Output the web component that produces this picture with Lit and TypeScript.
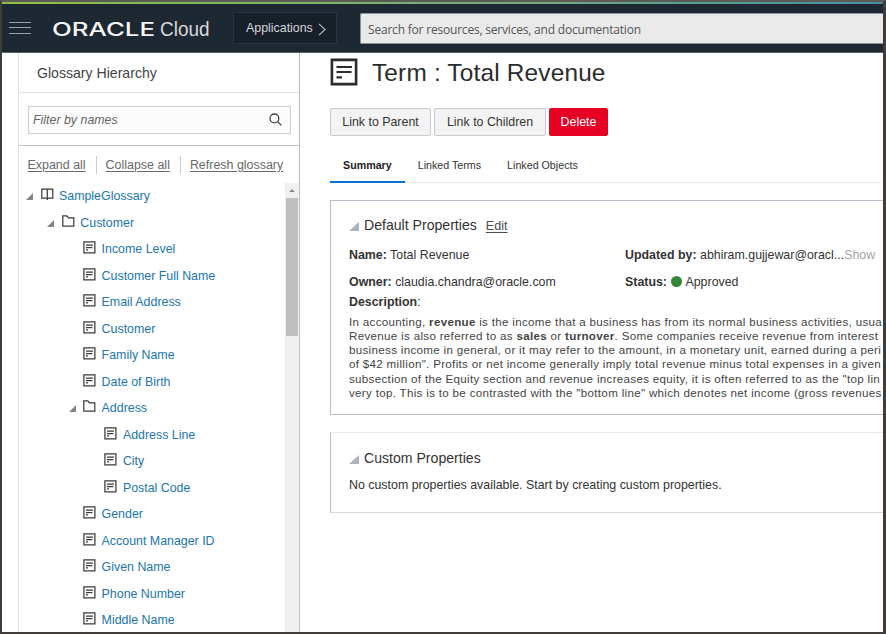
import { LitElement, html, css, svg, nothing } from "lit";
import { customElement } from "lit/decorators.js";
import { classMap } from "lit/directives/class-map.js";
import { styleMap } from "lit/directives/style-map.js";

type Kind = "book" | "folder" | "term";
interface TreeItem { label: string; kind: Kind; level: number; }

const TREE: TreeItem[] = [
  { label: "SampleGlossary", kind: "book", level: 0 },
  { label: "Customer", kind: "folder", level: 1 },
  { label: "Income Level", kind: "term", level: 2 },
  { label: "Customer Full Name", kind: "term", level: 2 },
  { label: "Email Address", kind: "term", level: 2 },
  { label: "Customer", kind: "term", level: 2 },
  { label: "Family Name", kind: "term", level: 2 },
  { label: "Date of Birth", kind: "term", level: 2 },
  { label: "Address", kind: "folder", level: 2 },
  { label: "Address Line", kind: "term", level: 3 },
  { label: "City", kind: "term", level: 3 },
  { label: "Postal Code", kind: "term", level: 3 },
  { label: "Gender", kind: "term", level: 2 },
  { label: "Account Manager ID", kind: "term", level: 2 },
  { label: "Given Name", kind: "term", level: 2 },
  { label: "Phone Number", kind: "term", level: 2 },
  { label: "Middle Name", kind: "term", level: 2 },
];

const GLYPHS = {
  book: svg`<path d="M.8 1.2H6.3V10.2H.8ZM6.3 1.2H11.8V10.2H6.3ZM6.3 10V12" />`,
  folder: svg`<path d="M.8 11.2V.9H4.8L6.4 2.9H11.8V11.2Z" />`,
  term: svg`<path d="M.9 .9H11.9V11.9H.9Z" /><path d="M3 4.2H10M3 6.5H9.4M3 8.8H5" />`,
};

@customElement("glossary-tree")
export class GlossaryTree extends LitElement {
  static styles = css`
    :host { display: block; flex: 1; min-width: 0; }
    .row { height: 26.5px; display: flex; align-items: center; white-space: nowrap; }
    .twist { width: 7px; height: 7px; margin-right: 7.5px; fill: #858585; flex: none; position: relative; top: .5px; }
    .twist.leaf { visibility: hidden; }
    .glyph { width: 13px; height: 13px; margin-right: 5.5px; flex: none; fill: none; stroke: #3b3b3b; stroke-width: 1.25; position: relative; top: -1.5px; }
    .label { color: #2176ae; font-size: 12.4px; }
  `;
  render() {
    return TREE.map((t) => html`
      <div class="row" style=${styleMap({ paddingLeft: `${7 + t.level * 21.3}px` })}>
        <svg class=${classMap({ twist: true, leaf: t.kind === "term" })} viewBox="0 0 7 7"><path d="M7 0V7H0Z" /></svg>
        <svg class="glyph" viewBox="0 0 13 13">${GLYPHS[t.kind]}</svg>
        <span class="label">${t.label}</span>
      </div>`);
  }
}

@customElement("property-panel")
export class PropertyPanel extends LitElement {
  static properties = { heading: {}, action: {} };
  declare heading: string;
  declare action?: string;
  static styles = css`
    :host { display: block; box-sizing: border-box; border: 1px solid #b9bfc8; border-right: 0; padding-left: 18px; overflow: hidden; }
    .head { display: flex; align-items: center; height: 20px; margin-top: 14px; color: #333; font-size: 14.1px; }
    .twist { width: 10px; height: 9px; fill: #adb4bc; margin-right: 5px; position: relative; top: 1px; }
    .action { margin-left: 9px; font-size: 12.6px; color: #4c4c4c; text-decoration: underline; text-underline-offset: 2px; position: relative; top: 1px; }
  `;
  render() {
    return html`<div class="head">
        <svg class="twist" viewBox="0 0 10 9"><path d="M10 0V9H0Z" /></svg>${this.heading}
        ${this.action ? html`<span class="action">${this.action}</span>` : nothing}
      </div><slot></slot>`;
  }
}

@customElement("app-root")
export class AppRoot extends LitElement {
  static styles = css`
    :host { display: block; font-family: "Liberation Sans", Arial, sans-serif; color: #333; }
    .frame { box-sizing: border-box; width: 886px; height: 634px; border: 2px solid #403c3a; border-top-color: #5d5b55; border-right-width: 3px; overflow: hidden; background: #fff; display: flex; flex-direction: column; }
    .accent { height: 2px; flex: none; background: linear-gradient(90deg, #8fbc45, #6fae83 60%, #468da0); }
    .bar { height: 49px; flex: none; background: #1e2833; display: flex; align-items: center; box-sizing: border-box; border-bottom: 1px solid #59626c; }
    .menu { width: 22px; height: 13px; margin-left: 7px; flex: none; stroke: #9aa1a8; stroke-width: 1; }
    .brand { width: 158px; height: 24px; margin-left: 22px; flex: none; fill: #f4f5f6; position: relative; top: 1px; }
    .wordmark { font-family: Inter, sans-serif; font-weight: 500; font-size: 18.5px; }
    .cloud { font-size: 20px; fill: #d7dade; }
    .apps { box-sizing: border-box; width: 104px; height: 32px; margin-left: 22px; flex: none; display: flex; align-items: center; padding-left: 12px; background: #171f28; border: 1px solid #29333e; color: #d2d5d8; font-size: 12.4px; gap: 5px; }
    .chev { width: 8px; height: 13px; fill: none; stroke: #b5babf; stroke-width: 1.1; position: relative; top: 1px; }
    .search { flex: 1; height: 31px; box-sizing: border-box; margin-left: 23px; background: #eaeaea; border: 1px solid #8b949b; border-right: 0; border-radius: 2px 0 0 2px; color: #555; font-family: "Open Sans", sans-serif; font-size: 12px; letter-spacing: -.2px; display: flex; align-items: center; padding: 2px 0 0 7px; white-space: nowrap; }
    .body { flex: 1; min-height: 0; display: flex; }
    .side { box-sizing: border-box; width: 282px; margin-left: 16px; flex: none; border-left: 1px solid #e1e3e6; border-right: 1px solid #b9bec9; display: flex; flex-direction: column; }
    .title { height: 40px; box-sizing: border-box; border-bottom: 1px solid #dfe2e5; padding-left: 18px; display: flex; align-items: center; font-size: 14.1px; color: #444; flex: none; }
    .filter { height: 53px; box-sizing: border-box; border-bottom: 1px solid #b9c1c9; padding: 13px 8px 0 9px; flex: none; }
    .field { box-sizing: border-box; height: 28px; border: 1px solid #c8ced5; background: #fcfcfc; display: flex; align-items: center; justify-content: space-between; padding: 0 8px 0 4px; font-style: italic; font-size: 12.4px; color: #666; }
    .lens { width: 13px; height: 13px; fill: none; stroke: #40454b; stroke-width: 1.3; position: relative; top: -1px; }
    .links { height: 37px; flex: none; display: flex; align-items: center; padding-left: 8.5px; font-size: 12.45px; color: #6a6a6a; white-space: nowrap; }
    .link { text-decoration: underline; text-underline-offset: 2px; }
    .sep { width: 1px; height: 18px; background: #c8cdd2; margin: 0 9px 0 10px; }
    .treewrap { flex: 1; min-height: 0; display: flex; overflow: hidden; }
    .scroll { width: 14px; background: #f0f0f0; display: flex; flex-direction: column; align-items: center; flex: none; }
    .up { width: 6px; height: 3px; fill: #8c8c8c; margin: 6px 0; }
    .thumb { width: 12px; height: 138px; background: #bfbfbf; }
    .main { flex: 1; min-width: 0; padding-left: 30px; overflow: hidden; }
    .heading { display: flex; align-items: center; height: 40px; font-size: 24.4px; letter-spacing: .18px; color: #2c2c2c; white-space: nowrap; }
    .docicon { width: 28px; height: 28px; margin-right: 14px; fill: none; stroke: #2c2c2c; stroke-width: 2.6; position: relative; top: -1px; }
    .buttons { display: flex; gap: 3px; margin-top: 15px; }
    .btn { box-sizing: border-box; height: 28px; border: 1px solid #c9cdd1; border-radius: 2px; background: #f3f3f3; color: #333; font-size: 12.4px; display: flex; align-items: center; justify-content: center; white-space: nowrap; }
    .w1 { width: 101px; } .w2 { width: 112px; }
    .danger { width: 59px; background: #e60023; border-color: #e60023; color: #fff; }
    .tabs { display: flex; height: 47px; box-sizing: border-box; border-bottom: 1px solid #ececec; font-size: 10.7px; }
    .tab { box-sizing: border-box; height: 47px; padding: 10px 13px 0; display: flex; align-items: center; white-space: nowrap; }
    .tab.active { padding-top: 12px; font-weight: bold; border-bottom: 2px solid #0572ce; color: #222; }
    .panel1 { margin-top: 17px; height: 215px; }
    .panel2 { margin-top: 17px; height: 81px; padding-top: 1px; border-top-color: #e6e8ea; border-bottom-color: #d5d8dc; }
    .grid { display: grid; grid-template-columns: 276px 1fr; grid-auto-rows: 26.5px; margin-top: 7px; align-items: center; font-size: 12.4px; white-space: nowrap; }
    .dim { color: #a5a5a5; }
    .dot { display: inline-block; width: 11px; height: 11px; border-radius: 50%; background: #35863a; margin: 0 3px 0 1px; vertical-align: -1px; }
    .desc { font-weight: bold; font-size: 12.4px; height: 18px; line-height: 18px; margin-top: -2px; }
    .colon { font-weight: normal; }
    .text { margin-top: 4px; font-size: 11.6px; letter-spacing: .31px; line-height: 14.15px; white-space: nowrap; color: #444; }
    .empty { margin-top: 8px; font-size: 12.4px; line-height: 18px; }
  `;

  render() {
    return html`<div class="frame">
      <div class="accent"></div>
      <header class="bar">
        <svg class="menu" viewBox="0 0 22 13"><path d="M0 .5H22M0 5.5H22M0 11.5H22" /></svg>
        <svg class="brand" viewBox="0 0 158 24">
          <text class="wordmark" x="-1" y="19" textLength="103" lengthAdjust="spacingAndGlyphs">ORACLE</text>
          <text class="cloud" x="107" y="19" textLength="49.5" lengthAdjust="spacingAndGlyphs">Cloud</text>
        </svg>
        <div class="apps">Applications <svg class="chev" viewBox="0 0 8 13"><path d="M1 .8L7 6.5L1 12.2" /></svg></div>
        <div class="search">Search for resources, services, and documentation</div>
      </header>
      <div class="body">
        <aside class="side">
          <div class="title">Glossary Hierarchy</div>
          <div class="filter"><div class="field">Filter by names
            <svg class="lens" viewBox="0 0 13 13"><circle cx="5.4" cy="5.4" r="4.4" /><path d="M8.6 8.6L12.3 12.3" /></svg></div></div>
          <nav class="links"><span class="link">Expand all</span><i class="sep"></i><span class="link">Collapse all</span><i class="sep"></i><span class="link">Refresh glossary</span></nav>
          <div class="treewrap"><glossary-tree></glossary-tree>
            <div class="scroll"><svg class="up" viewBox="0 0 6 3"><path d="M0 3L3 0L6 3Z" /></svg><div class="thumb"></div></div>
          </div>
        </aside>
        <main class="main">
          <div class="heading"><svg class="docicon" viewBox="0 0 28 28"><path d="M1.9 1.9H26.1V26.1H1.9Z" /><path d="M6.5 9H22M6.5 14H21.5M6.5 19.3H12" stroke-width="2.2" /></svg>Term : Total Revenue</div>
          <div class="buttons"><div class="btn w1">Link to Parent</div><div class="btn w2">Link to Children</div><div class="btn danger">Delete</div></div>
          <div class="tabs"><div class="tab active">Summary</div><div class="tab">Linked Terms</div><div class="tab">Linked Objects</div></div>
          <property-panel class="panel1" heading="Default Properties" action="Edit">
            <div class="grid">
              <div><b>Name:</b> Total Revenue</div><div><b>Updated by:</b> abhiram.gujjewar@oracl...<span class="dim">Show</span></div>
              <div><b>Owner:</b> claudia.chandra@oracle.com</div><div><b>Status:</b> <i class="dot"></i>Approved</div>
            </div>
            <div class="desc">Description<span class="colon">:</span></div>
            <div class="text">
              <div>In accounting, <b>revenue</b> is the income that a business has from its normal business activities, usua</div>
              <div>Revenue is also referred to as <b>sales</b> or <b>turnover</b>. Some companies receive revenue from interest</div>
              <div>business income in general, or it may refer to the amount, in a monetary unit, earned during a peri</div>
              <div>of $42 million". Profits or net income generally imply total revenue minus total expenses in a given</div>
              <div>subsection of the Equity section and revenue increases equity, it is often referred to as the "top lin</div>
              <div>very top. This is to be contrasted with the "bottom line" which denotes net income (gross revenues</div>
            </div>
          </property-panel>
          <property-panel class="panel2" heading="Custom Properties">
            <div class="empty">No custom properties available. Start by creating custom properties.</div>
          </property-panel>
        </main>
      </div>
    </div>`;
  }
}
